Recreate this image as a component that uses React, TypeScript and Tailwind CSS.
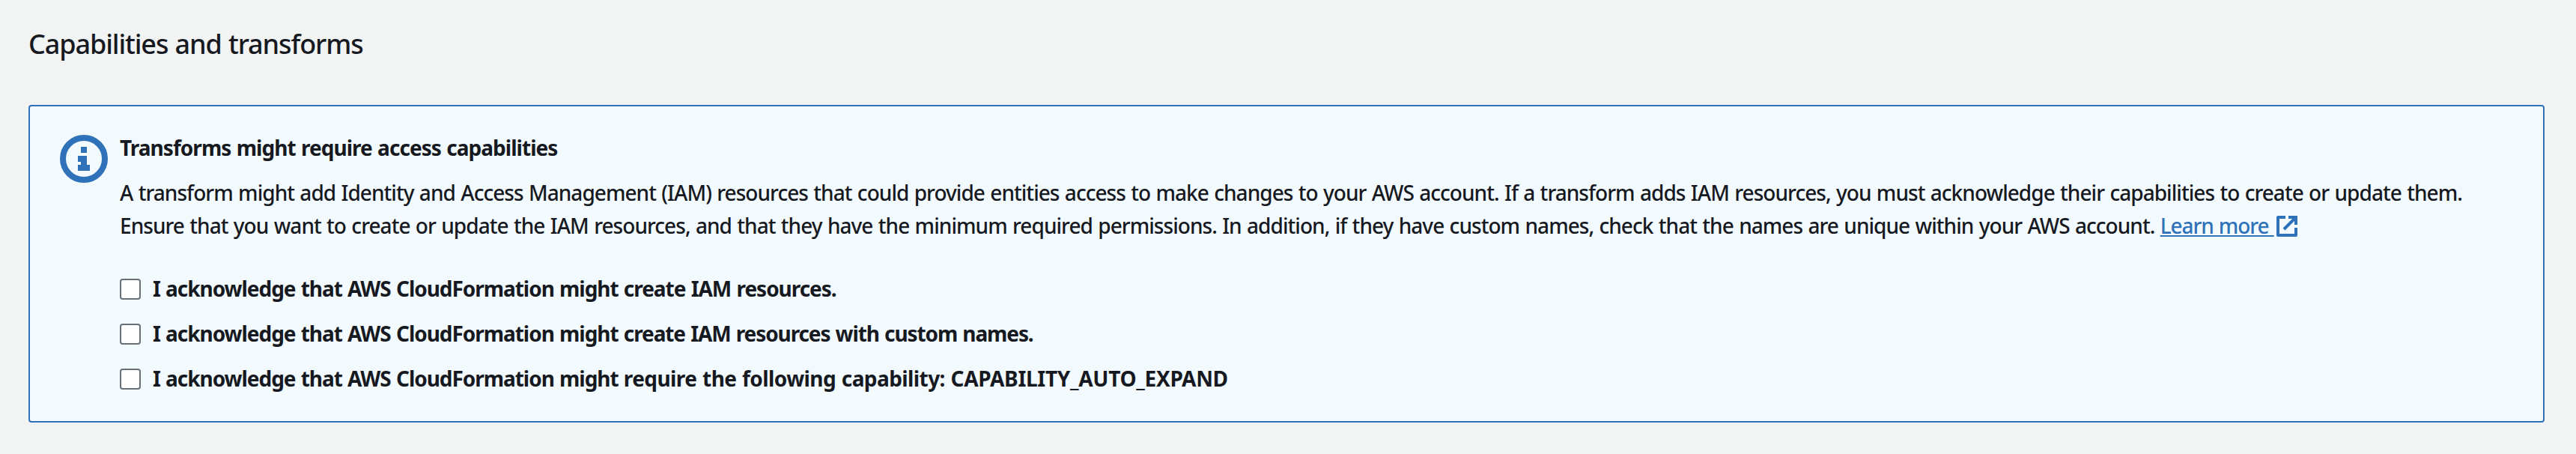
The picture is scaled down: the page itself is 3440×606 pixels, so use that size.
type Part = { text: string; tracking: string };

const intro: Part = {
  text: "I acknowledge that AWS CloudFormation might ",
  tracking: "tracking-[-1.04px]",
};

const options: Part[][] = [
  [intro, { text: "create IAM resources.", tracking: "tracking-[-1.03px]" }],
  [
    intro,
    {
      text: "create IAM resources with custom names.",
      tracking: "tracking-[-1.1px]",
    },
  ],
  [
    intro,
    {
      text: "require the following capability: ",
      tracking: "tracking-[-0.58px]",
    },
    { text: "CAPABILITY_AUTO_EXPAND", tracking: "tracking-[-0.3px]" },
  ],
];

function InfoIcon() {
  return (
    <svg viewBox="0 0 64 64" className="mt-[5px] h-16 w-16 shrink-0" aria-hidden="true">
      <circle cx="32" cy="32" r="28" fill="none" stroke="#3072b9" strokeWidth="8" />
      <path
        d="M28 16h8v8h-8zM24 28h12v12h4v8H24v-8h4v-4h-4z"
        fill="#3072b9"
        shapeRendering="crispEdges"
      />
    </svg>
  );
}

function ExternalIcon() {
  return (
    <svg
      viewBox="0 0 28 28"
      className="ml-[3px] inline-block h-7 w-7 align-[-4px]"
      fill="none"
      stroke="#3072b9"
      strokeWidth="4"
      aria-hidden="true"
    >
      <path d="M12 2H2v24h24V16" strokeLinejoin="round" />
      <path d="M16 2h10v10M26 2L10 18" />
    </svg>
  );
}

export default function App() {
  return (
    <main className="h-[606px] w-[3440px] bg-[#f2f3f3] px-[38px] pt-[37px] font-['Noto_Sans',sans-serif] text-[28px] leading-[44px] text-[#16191f] [word-spacing:1px]">
      <h2 className="text-[36px] leading-[44px] font-medium tracking-[-1.1px]">
        Capabilities and transforms
      </h2>
      <section className="mt-[59px] flex h-[424px] w-[3360px] gap-4 rounded border-2 border-[#3072b9] bg-[#f2fafd] pt-[33px] pl-10">
        <InfoIcon />
        <div className="whitespace-pre">
          <h3 className="font-bold tracking-[-0.96px]">
            Transforms might require access capabilities
          </h3>
          <p className="mt-4 font-medium">
            <span className="block tracking-[-0.957px]">
              A transform might add Identity and Access Management (IAM) resources that could provide entities access to make changes to your AWS account. If a transform adds IAM resources, you must acknowledge their capabilities to create or update them.
            </span>
            <span className="block h-11 tracking-[-0.955px]">
              {"Ensure that you want to create or update the IAM resources, and that they have the minimum required permissions. In addition, if they have custom names, check that the names are unique within your AWS account. "}
              <a
                href="#"
                className="tracking-[-1.09px] text-[#3072b9] underline decoration-2 underline-offset-[2px] [text-decoration-skip-ink:none]"
              >
                {"Learn more "}
              </a>
              <ExternalIcon />
            </span>
          </p>
          <div className="mt-10 flex flex-col gap-4">
            {options.map((parts, index) => (
              <label key={index} className="flex h-11">
                <input
                  type="checkbox"
                  className="mt-[9px] mr-4 h-7 w-7 shrink-0 appearance-none rounded border-2 border-[#687078] bg-white"
                />
                <span className="font-bold">
                  {parts.map((part) => (
                    <span key={part.text} className={part.tracking}>
                      {part.text}
                    </span>
                  ))}
                </span>
              </label>
            ))}
          </div>
        </div>
      </section>
    </main>
  );
}
